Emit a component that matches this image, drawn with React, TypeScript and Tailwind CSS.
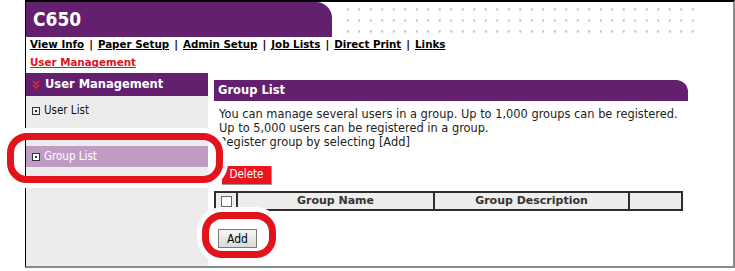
import React from "react";

const sans = "font-['DejaVu_Sans',sans-serif]";
const cond = "font-['DejaVu_Sans_Condensed','DejaVu_Sans',sans-serif] [font-stretch:condensed]";

function BoxIcon({ filled }: { filled?: boolean }) {
  return (
    <svg width="8" height="8" viewBox="0 0 8 8" className="shrink-0">
      <rect x="0.5" y="0.5" width="7" height="7" fill={filled ? "#ffffff" : "none"} stroke="#333" />
      <rect x="3" y="3" width="2" height="2" fill="#333" />
    </svg>
  );
}

function Chevrons() {
  return (
    <svg width="8" height="9" viewBox="0 0 8 9" className="shrink-0">
      <path d="M1 1l3 3 3-3M1 5l3 3 3-3" fill="none" stroke="#e8262e" strokeWidth="1.6" />
    </svg>
  );
}

const links = ["View Info", "Paper Setup", "Admin Setup", "Job Lists", "Direct Print", "Links"];

export default function App() {
  return (
    <div className={`relative w-[735px] h-[271px] bg-white overflow-hidden ${sans}`}>
      <div className="ml-[25px] w-[710px] h-[268px] border-t-2 border-l border-r-2 border-b-2 border-t-black border-l-black border-r-[#8a8a8a] border-b-[#8a8a8a] flex flex-col">
        {/* top banner */}
        <div className="h-[35px] flex shrink-0">
          <div className="w-[306px] bg-[#63206e] rounded-tr-[16px] flex items-center pl-[7px]">
            <span className={`text-white font-bold text-[19px] leading-none ${cond}`}>C650</span>
          </div>
          <div className="flex-1 pl-[10px] pr-[36px] pt-[2px] pb-[2px]">
            <div className="w-full h-full bg-[radial-gradient(circle,#bdbdbd_0.9px,transparent_1.4px)] bg-[length:11.5px_11px]" />
          </div>
        </div>

        {/* nav */}
        <div className="h-[15px] flex items-center pl-[4px] text-[10.3px] font-bold text-black leading-none">
          {links.map((l, i) => (
            <React.Fragment key={l}>
              <span className="underline underline-offset-1">{l}</span>
              {i < links.length - 1 && <span className="px-[5px]">|</span>}
            </React.Fragment>
          ))}
        </div>
        <div className="h-[21px] flex items-center pl-[4px] text-[10.3px] font-bold leading-none">
          <span className="text-[#e3131b] underline underline-offset-1">User Management</span>
        </div>

        {/* body */}
        <div className="flex flex-1">
          {/* sidebar */}
          <div className="w-[182px] bg-[#ececec] flex flex-col">
            <div className="h-[23px] bg-[#63206e] flex items-center gap-[5px] pl-[6px] text-white font-bold text-[11.5px]">
              <Chevrons />
              <span>User Management</span>
            </div>
            <div className={`h-[26px] flex items-center gap-[4px] pl-[6px] pt-[3px] text-[11.5px] text-[#111] ${cond}`}>
              <BoxIcon />
              <span>User List</span>
            </div>
            <div className={`mt-[24px] h-[21px] bg-[#c09cc4] flex items-center gap-[4px] pl-[6px] text-[11.5px] text-white ${cond}`}>
              <BoxIcon filled />
              <span>Group List</span>
            </div>
          </div>

          {/* main */}
          <div className="ml-[6px] w-[474px] pt-[7px] flex flex-col items-start">
            <div className="w-full h-[21px] bg-[#63206e] rounded-tr-[12px] flex items-center pl-[4px] text-white font-bold text-[11.5px]">
              Group List
            </div>
            <div className="pl-[5px] pt-[6px] text-[11.4px] leading-[14px] text-[#222] whitespace-nowrap">
              <p>You can manage several users in a group. Up to 1,000 groups can be registered.</p>
              <p>Up to 5,000 users can be registered in a group.</p>
              <p>Register group by selecting [Add]</p>
            </div>
            <button className={`mt-[17px] ml-[8px] w-[50px] h-[19px] bg-[#e8151c] border-r border-b border-r-[#999] border-b-[#999] text-white text-[11.5px] leading-none flex items-center justify-center ${cond}`}>
              Delete
            </button>
            <div className="mt-[6px] w-[469px] h-[20px] border-2 border-[#2e2e2e] bg-[#ededeb] flex text-[11px] font-bold text-[#333]">
              <div className="w-[22px] border-r-2 border-[#2e2e2e] flex items-center justify-center">
                <div className="w-[11px] h-[11px] bg-white border border-[#666]" />
              </div>
              <div className="w-[197px] border-r-2 border-[#2e2e2e] flex items-center justify-center">Group Name</div>
              <div className="w-[195px] border-r-2 border-[#2e2e2e] flex items-center justify-center">Group Description</div>
              <div className="flex-1" />
            </div>
            <button className={`mt-[18px] ml-[4px] w-[39px] h-[19px] bg-gradient-to-b from-[#f6f6f6] to-[#d9d9d9] border border-[#7a7a7a] text-[12px] text-black leading-none flex items-center justify-center ${cond}`}>
              Add
            </button>
          </div>
        </div>
      </div>

      {/* callouts */}
      <div className="absolute left-[7px] top-[133px] w-[216px] h-[50px] border-[7px] border-[#e3131b] rounded-[20px] shadow-[0_0_0_5px_#ffffff]" />
      <div className="absolute left-[202px] top-[212px] w-[74px] h-[46px] border-[7px] border-[#e3131b] rounded-[20px] shadow-[0_0_0_5px_#ffffff]" />
    </div>
  );
}
